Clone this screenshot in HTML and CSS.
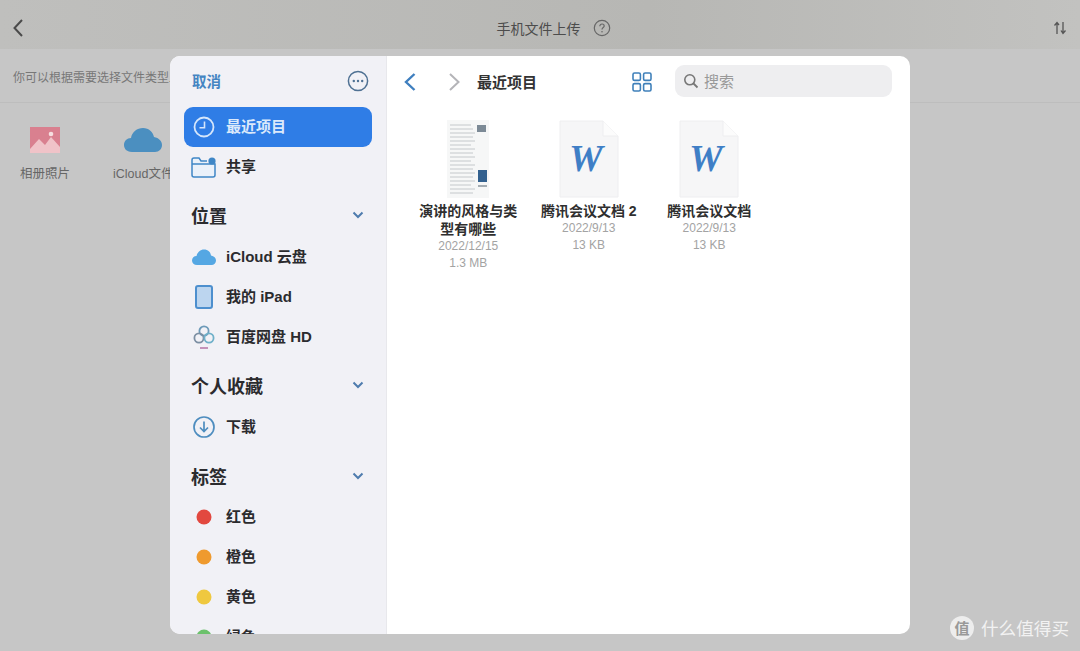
FILE: index.html
```html
<!DOCTYPE html>
<html lang="zh-CN">
<head>
    <meta charset="UTF-8">
    <title>手机文件上传</title>
    <link rel="stylesheet" href="styles.css">
</head>
<body>
    <div class="page">
        <header class="topbar">
            <svg class="back" width="12" height="20" viewBox="0 0 12 20"><path d="M10 2 L2.5 10 L10 18" fill="none" stroke="#4a4a4a" stroke-width="2"/></svg>
            <div class="topbar-title">
                <span>手机文件上传</span>
                <svg width="18" height="18" viewBox="0 0 18 18"><circle cx="9" cy="9" r="7.7" fill="none" stroke="#666" stroke-width="1.2"/><path d="M6.8 7.2 C6.8 5.8 7.8 5 9 5 C10.3 5 11.2 5.8 11.2 7 C11.2 8.4 9 8.6 9 10.4" fill="none" stroke="#666" stroke-width="1.2"/><circle cx="9" cy="12.8" r="0.8" fill="#666"/></svg>
            </div>
            <svg class="sort" width="14" height="14" viewBox="0 0 14 14"><path d="M4 13 V2 M1.5 4.5 L4 1.5 L6 4 M10 1 V12 M8 9.5 L10 12.5 L12.5 9.5" fill="none" stroke="#555" stroke-width="1.3"/></svg>
        </header>
        <div class="hint">你可以根据需要选择文件类型上传</div>
        <div class="sources">
            <div class="source">
                <svg width="30" height="26" viewBox="0 0 30 26"><rect width="30" height="26" fill="#d9808f"/><path d="M0 22 L9 12 L15 18 L21 10 L30 20 V26 H0 Z" fill="#f0c3c8"/><circle cx="21" cy="7" r="2.3" fill="#f6dfe0"/></svg>
                <span>相册照片</span>
            </div>
            <div class="source">
                <svg width="38" height="26" viewBox="0 0 38 26"><path d="M8 25 C2 25 0 21 0 18 C0 14 3 11 7 11 C8 5 13 1 19 1 C25 1 29 5 30 10 C35 11 38 14 38 18 C38 22 35 25 31 25 Z" fill="#4b8fc0"/></svg>
                <span>iCloud文件</span>
            </div>
        </div>
    </div>

    <div class="picker">
        <aside class="sidebar">
            <div class="side-top">
                <span class="cancel">取消</span>
                <svg width="22" height="22" viewBox="0 0 22 22"><circle cx="11" cy="11" r="9.6" fill="none" stroke="#4f7193" stroke-width="1.5"/><circle cx="6.8" cy="11" r="1.2" fill="#4f7193"/><circle cx="11" cy="11" r="1.2" fill="#4f7193"/><circle cx="15.2" cy="11" r="1.2" fill="#4f7193"/></svg>
            </div>
            <div class="row active">
                <svg width="24" height="24" viewBox="0 0 24 24"><circle cx="12" cy="12" r="9.5" fill="none" stroke="#d5e6fb" stroke-width="1.8"/><path d="M12.5 6.5 V12.8 H7.5" fill="none" stroke="#d5e6fb" stroke-width="1.6"/></svg>
                <span>最近项目</span>
            </div>
            <div class="row">
                <svg width="26" height="22" viewBox="0 0 26 22"><path d="M1 19 V4 C1 3 2 2 3 2 H8 L10 5 H16 M1 8 H24 V19 C24 20 23 21 22 21 H3 C2 21 1 20 1 19 Z" fill="#eaf1fa" stroke="#3f86c6" stroke-width="1.5"/><circle cx="21" cy="5" r="3.6" fill="#3f86c6"/></svg>
                <span>共享</span>
            </div>

            <div class="group">位置<svg class="chevron" width="12" height="8" viewBox="0 0 12 8"><path d="M1.5 1.5 L6 6 L10.5 1.5" fill="none" stroke="#4f7cae" stroke-width="2"/></svg></div>
            <div class="row">
                <svg width="24" height="18" viewBox="0 0 24 18"><path d="M5 17 C2 17 0 15 0 12.5 C0 10 2 8 4.5 8 C5.5 4 8.5 1.5 12 1.5 C16 1.5 18.5 4 19 7.5 C22 8 24 10 24 12.5 C24 15 22 17 19.5 17 Z" fill="#55a7e3"/></svg>
                <span>iCloud 云盘</span>
            </div>
            <div class="row">
                <svg width="18" height="24" viewBox="0 0 18 24"><rect x="1" y="1" width="16" height="22" rx="2" fill="#bcd5ef" stroke="#4d8fce" stroke-width="2"/></svg>
                <span>我的 iPad</span>
            </div>
            <div class="row">
                <svg width="22" height="26" viewBox="0 0 22 26"><circle cx="11" cy="7" r="4.6" fill="none" stroke="#6d9ab8" stroke-width="1.8"/><circle cx="6" cy="14" r="4.6" fill="none" stroke="#7c8fa3" stroke-width="1.8"/><circle cx="16" cy="14" r="4.6" fill="none" stroke="#6fb0c9" stroke-width="1.8"/><path d="M7 24 H15" stroke="#b06aa0" stroke-width="1.4"/></svg>
                <span>百度网盘 HD</span>
            </div>

            <div class="group">个人收藏<svg class="chevron" width="12" height="8" viewBox="0 0 12 8"><path d="M1.5 1.5 L6 6 L10.5 1.5" fill="none" stroke="#4f7cae" stroke-width="2"/></svg></div>
            <div class="row">
                <svg width="24" height="24" viewBox="0 0 24 24"><circle cx="12" cy="12" r="10" fill="none" stroke="#4e8dbf" stroke-width="1.7"/><path d="M12 6.5 V16 M8 12.5 L12 16.5 L16 12.5" fill="none" stroke="#4e8dbf" stroke-width="1.7"/></svg>
                <span>下载</span>
            </div>

            <div class="group tags">标签<svg class="chevron" width="12" height="8" viewBox="0 0 12 8"><path d="M1.5 1.5 L6 6 L10.5 1.5" fill="none" stroke="#4f7cae" stroke-width="2"/></svg></div>
            <div class="row"><i class="dot red"></i><span>红色</span></div>
            <div class="row"><i class="dot orange"></i><span>橙色</span></div>
            <div class="row"><i class="dot yellow"></i><span>黄色</span></div>
            <div class="row"><i class="dot green"></i><span>绿色</span></div>
        </aside>

        <main class="browser">
            <div class="toolbar">
                <svg width="14" height="20" viewBox="0 0 14 20"><path d="M11.5 2 L3 10 L11.5 18" fill="none" stroke="#3f7fbf" stroke-width="2.4"/></svg>
                <svg class="forward" width="14" height="20" viewBox="0 0 14 20"><path d="M3 2 L11.5 10 L3 18" fill="none" stroke="#b4b4b8" stroke-width="2"/></svg>
                <span class="folder">最近项目</span>
                <svg class="grid" width="20" height="20" viewBox="0 0 20 20" fill="none" stroke="#3f80ba" stroke-width="1.6"><rect x="1" y="1" width="7.4" height="7.4" rx="1.5"/><rect x="11.6" y="1" width="7.4" height="7.4" rx="1.5"/><rect x="1" y="11.6" width="7.4" height="7.4" rx="1.5"/><rect x="11.6" y="11.6" width="7.4" height="7.4" rx="1.5"/></svg>
                <div class="search">
                    <svg width="16" height="16" viewBox="0 0 16 16"><circle cx="6.8" cy="6.8" r="5" fill="none" stroke="#777" stroke-width="1.6"/><path d="M10.5 10.5 L14.5 14.5" stroke="#777" stroke-width="1.8"/></svg>
                    <span>搜索</span>
                </div>
            </div>
            <div class="files">
                <div class="file">
                    <div class="thumb">
                        <svg width="42" height="78" viewBox="0 0 42 78"><rect width="42" height="78" fill="#f6f7f7"/><g stroke="#c4c8cb" stroke-width="1"><path d="M3 5 H24 M3 9 H26 M3 13 H28 M3 17 H26 M3 21 H28 M3 25 H24 M3 29 H28 M3 33 H26 M3 37 H28 M3 41 H24 M3 45 H28 M3 49 H26 M3 53 H28 M3 57 H26 M3 61 H28 M3 65 H24 M3 69 H28 M3 73 H26"/></g><rect x="30" y="5" width="9" height="7" fill="#7c8a96"/><rect x="31" y="50" width="9" height="12" fill="#33618f"/><path d="M31 66 H40" stroke="#8a949c" stroke-width="1.5"/></svg>
                    </div>
                    <div class="name">演讲的风格与类型有哪些</div>
                    <div class="meta">2022/12/15</div>
                    <div class="meta">1.3 MB</div>
                </div>
                <div class="file">
                    <div class="thumb">
                        <svg width="60" height="78" viewBox="0 0 60 78"><path d="M1 1 H44 L59 16 V77 H1 Z" fill="#f6f6f7" stroke="#eeeef0"/><path d="M44 1 V16 H59" fill="#fcfcfc" stroke="#eeeef0"/><text class="word" x="27" y="51" text-anchor="middle">W</text></svg>
                    </div>
                    <div class="name">腾讯会议文档 2</div>
                    <div class="meta">2022/9/13</div>
                    <div class="meta">13 KB</div>
                </div>
                <div class="file">
                    <div class="thumb">
                        <svg width="60" height="78" viewBox="0 0 60 78"><path d="M1 1 H44 L59 16 V77 H1 Z" fill="#f6f6f7" stroke="#eeeef0"/><path d="M44 1 V16 H59" fill="#fcfcfc" stroke="#eeeef0"/><text class="word" x="27" y="51" text-anchor="middle">W</text></svg>
                    </div>
                    <div class="name">腾讯会议文档</div>
                    <div class="meta">2022/9/13</div>
                    <div class="meta">13 KB</div>
                </div>
            </div>
        </main>
    </div>

    <div class="watermark">
        <span class="badge">值</span>
        <span>什么值得买</span>
    </div>
</body>
</html>
```

FILE: styles.css
```css
* {
    box-sizing: border-box;
}
html, body {
    margin: 0;
    height: 100%;
    overflow: hidden;
}
body {
    font-family: "Liberation Sans", "Noto Sans CJK SC", sans-serif;
    background: #c6c6c6;
    color: #1c1c1e;
}
.page {
    height: 651px;
}
.topbar {
    height: 49px;
    display: flex;
    align-items: center;
    justify-content: space-between;
    padding: 7px 13px 0 12px;
    background: linear-gradient(90deg, #bfbfbd, #b7b7b4 60%, #c2c2c0);
}
.topbar-title {
    display: flex;
    align-items: center;
    gap: 12px;
    font-size: 14px;
    color: #4c4c4c;
    margin-left: 30px;
}
.hint {
    height: 54px;
    padding: 19px 0 0 13px;
    font-size: 12px;
    color: #777;
    border-bottom: 1px solid #bdbdbd;
}
.sources {
    display: flex;
    padding-top: 24px;
    padding-left: 20px;
}
.source {
    display: flex;
    flex-direction: column;
    align-items: center;
    gap: 10px;
    font-size: 12.5px;
    color: #666;
    height: 62px;
}
.source:first-child {
    width: 50px;
    margin-right: 43px;
}
.source span {
    white-space: nowrap;
}
.picker {
    position: absolute;
    left: 170px;
    top: 56px;
    width: 740px;
    height: 578px;
    display: flex;
    border-radius: 10px;
    overflow: hidden;
    background: #fff;
}
.sidebar {
    width: 217px;
    background: #f1f1f6;
    border-right: 1px solid #e8e8ec;
    padding: 0 14px;
    flex-shrink: 0;
}
.side-top {
    height: 51px;
    display: flex;
    align-items: center;
    justify-content: space-between;
    padding: 0 3px 2px 8px;
}
.cancel {
    font-size: 14.5px;
    font-weight: bold;
    color: #4585c2;
}
.row {
    height: 40px;
    display: flex;
    align-items: center;
    font-size: 15px;
    font-weight: bold;
    color: #2b2b2e;
    position: relative;
    padding: 0 0 3px 42px;
}
.row svg, .row .dot {
    position: absolute;
    left: 20px;
    top: 50%;
    transform: translate(-50%, -50%);
}
.row.active {
    background: #2f7de6;
    color: #dbe9fb;
    border-radius: 9px;
    width: 188px;
}
.dot {
    width: 15px;
    height: 15px;
    border-radius: 50%;
}
.red { background: #e2483f; }
.orange { background: #ef9a2e; }
.yellow { background: #efc83f; }
.green { background: #6cc16c; }
.group {
    height: 30px;
    margin: 14px 0 6px;
    padding: 0 8px 2px 7px;
    display: flex;
    align-items: center;
    justify-content: space-between;
    font-size: 18px;
    font-weight: bold;
    color: #2b2b2e;
}
.group.tags {
    margin: 15px 0 5px;
}
.browser {
    flex: 1;
}
.toolbar {
    height: 51px;
    display: flex;
    align-items: center;
    padding: 0 18px 0 16px;
}
.forward {
    margin-left: 30px;
}
.folder {
    margin-left: 16px;
    font-size: 15px;
    font-weight: bold;
    color: #333;
}
.grid {
    margin-left: auto;
    margin-right: -1px;
}
.search {
    width: 217px;
    height: 32px;
    margin-left: 24px;
    margin-bottom: 2px;
    background: #eeeef0;
    border-radius: 9px;
    display: flex;
    align-items: center;
    gap: 5px;
    padding-left: 8px;
    font-size: 15px;
    color: #999;
}
.files {
    display: flex;
    padding: 13px 0 0 21px;
}
.file {
    width: 120.5px;
    display: flex;
    flex-direction: column;
    align-items: center;
    text-align: center;
}
.thumb {
    height: 78px;
    margin-bottom: 4px;
    display: flex;
}
.name {
    width: 100px;
    font-size: 14px;
    line-height: 18px;
    font-weight: bold;
    color: #2f2f2f;
}
.file:not(:first-child) .name {
    width: auto;
}
.meta {
    font-size: 12px;
    line-height: 17px;
    color: #a3a3a3;
}
.word {
    font-family: "Liberation Serif", serif;
    font-style: italic;
    font-weight: bold;
    font-size: 38px;
    fill: #3f7fc6;
}
.watermark {
    position: absolute;
    left: 950px;
    top: 615px;
    display: flex;
    align-items: center;
    gap: 7px;
    font-size: 17.6px;
    color: #f2f2f2;
    white-space: nowrap;
}
.badge {
    width: 24px;
    height: 24px;
    border-radius: 50%;
    background: #ededed;
    color: #999;
    font-size: 15px;
    font-weight: bold;
    display: flex;
    align-items: center;
    justify-content: center;
}
```
